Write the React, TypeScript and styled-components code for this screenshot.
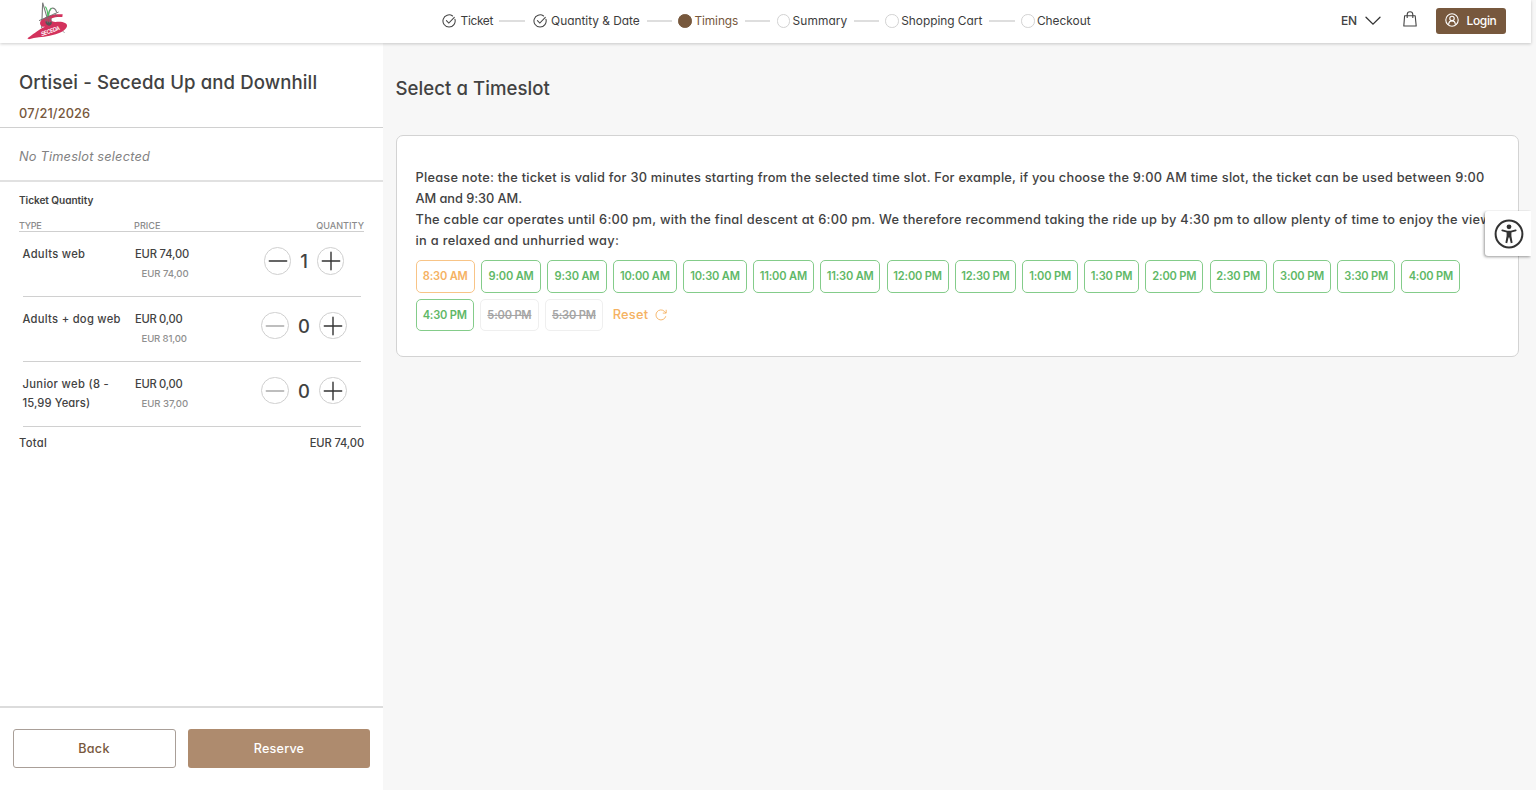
import React from "react";
import styled, { createGlobalStyle, css } from "styled-components";

const GlobalStyle = createGlobalStyle`
  *, *::before, *::after { box-sizing: border-box; }
  body {
    margin: 0;
    background: #f7f7f7;
    color: #424242;
    font-family: Inter, "Liberation Sans", sans-serif;
    font-feature-settings: "cv11";
    font-weight: 500;
    overflow: hidden;
  }
  button { font: inherit; font-feature-settings: inherit; color: inherit; background: none; border: 0; padding: 0; margin: 0; }
`;

/** Text whose tracking is tuned per label. */
const Label = styled.span<{ $track?: number }>`
  letter-spacing: ${(p) => p.$track ?? 0}px;
  white-space: pre;
`;

const Page = styled.div`
  display: flex;
  flex-direction: column;
  width: 1536px;
  height: 790px;
`;

const Header = styled.header`
  position: relative;
  z-index: 2;
  flex: none;
  display: grid;
  grid-template-columns: 442px 1fr auto;
  align-items: center;
  width: 1531px;
  height: 43px;
  padding: 0 25.5px 2px 0;
  background: #fff;
  box-shadow: 0 1px 3px rgba(0, 0, 0, 0.2);
`;

const Logo = styled.svg`
  width: 48px;
  height: 44px;
  margin: 0 0 -2px 24px;
  align-self: start;
`;

const Steps = styled.nav`
  display: flex;
  align-items: center;
  font-size: 11.9px;
  font-weight: 400;
  line-height: 18px;
`;

const Step = styled.div<{ $width: number; $gap: number; $active?: boolean }>`
  flex: none;
  display: flex;
  align-items: center;
  gap: ${(p) => p.$gap}px;
  width: ${(p) => p.$width}px;
  color: ${(p) => (p.$active ? "#77583d" : "#3d3d3d")};
  svg { flex: none; }
`;

const Connector = styled.i<{ $space: number }>`
  flex: none;
  width: 25.5px;
  height: 1.5px;
  margin-right: ${(p) => p.$space}px;
  background: #dedede;
`;

const Dot = styled.i<{ $filled?: boolean }>`
  flex: none;
  width: 13.5px;
  height: 13.5px;
  border-radius: 50%;
  border: 1px solid ${(p) => (p.$filled ? "#77583d" : "#d2d2d2")};
  background: ${(p) => (p.$filled ? "#77583d" : "#fff")};
`;

const Tools = styled.div`
  display: flex;
  align-items: center;
  font-size: 12px;
`;

const Language = styled.button`
  display: flex;
  align-items: center;
  gap: 7.5px;
  margin-right: 22.5px;
  padding-bottom: 1px;
`;

const Bag = styled.svg`
  margin: -5px 18.5px 0 0;
`;

const LoginButton = styled.button`
  display: flex;
  align-items: center;
  gap: 8px;
  width: 70px;
  height: 26px;
  padding: 0 0 2px 9px;
  border-radius: 3px;
  background: #77583d;
  color: #fff;
`;

const Body = styled.div`
  flex: 1;
  display: flex;
  min-height: 0;
`;

const Sidebar = styled.aside`
  flex: none;
  display: flex;
  flex-direction: column;
  width: 383px;
  background: #fff;
`;

const TicketHead = styled.section`
  height: 85px;
  padding: 25px 19px 0;
  border-bottom: 1px solid #d0d0d0;
`;

const TicketTitle = styled.h1`
  margin: 0;
  font-size: 18.6px;
  font-weight: 500;
  line-height: 28px;
`;

const TicketDate = styled.div`
  margin-top: 7.6px;
  color: #77583d;
  font-size: 12.8px;
  line-height: 20px;
`;

const SlotState = styled.section`
  height: 54px;
  padding: 19px 19px 0;
  border-bottom: 2px solid #e1e1e1;
  color: #828282;
  font-size: 12.8px;
  font-style: italic;
  font-weight: 400;
  line-height: 20px;
`;

const Quantities = styled.section`
  flex: 1;
  padding: 0 19px;
  font-size: 11.2px;
`;

const QuantityTitle = styled.h2`
  margin: 10px 0 11px;
  font-size: 10.1px;
  font-weight: 600;
  line-height: 16px;
`;

const ColumnHeads = styled.div`
  display: grid;
  grid-template-columns: 115px 1fr auto;
  height: 13px;
  border-bottom: 1px solid #cfcfcf;
  color: #8b8b8b;
  font-size: 9.1px;
  line-height: 13px;
`;

const TicketRow = styled.div`
  display: grid;
  grid-template-columns: 112.5px 1fr 88px;
  height: 64.9px;
  margin: 0 3.5px;
  padding-top: 13px;
  border-bottom: 1.4px solid #d0d0d0;
  line-height: 19.2px;
`;

const SubPrice = styled.div`
  padding-left: 6.5px;
  color: #8f8f8f;
  font-size: 9.6px;
  line-height: 20px;
`;

const Counter = styled.div`
  display: flex;
  justify-content: center;
  width: 88px;
  margin-left: -12.5px;
`;

const CounterButton = styled.button<{ $muted?: boolean }>`
  flex: none;
  display: flex;
  align-items: center;
  justify-content: center;
  width: 27.5px;
  height: 27.5px;
  margin-top: 2px;
  border: 1px solid #cfcfcf;
  border-radius: 50%;
  color: ${(p) => (p.$muted ? "#a9a9a9" : "#333")};
  svg { flex: none; }
`;

const Count = styled.span<{ $width: number }>`
  width: ${(p) => p.$width}px;
  padding-top: 7px;
  font-size: 18.4px;
  text-align: center;
`;

const TotalRow = styled.div`
  display: flex;
  justify-content: space-between;
  padding-top: 6.2px;
  line-height: 20px;
`;

const SidebarFooter = styled.footer`
  display: flex;
  gap: 12.5px;
  height: 84px;
  padding: 21.4px 13px 0 12.5px;
  border-top: 2px solid #dcdcdc;
`;

const ActionButton = styled.button<{ $primary?: boolean }>`
  width: ${(p) => (p.$primary ? 182 : 163)}px;
  height: 38.8px;
  border-radius: 3px;
  font-size: 12.6px;
  ${(p) =>
    p.$primary
      ? css`
          background: #ae8b6e;
          color: #fff;
        `
      : css`
          border: 1px solid #a99f98;
          color: #77583d;
        `}
`;

const Main = styled.main`
  flex: 1;
  padding: 31px 17.5px 0 12.5px;
`;

const MainTitle = styled.h2`
  margin: 0;
  font-size: 18.6px;
  font-weight: 500;
  line-height: 28px;
`;

const Card = styled.section`
  height: 222px;
  margin-top: 33px;
  padding: 32.2px 19.5px 0 19px;
  border: 1px solid #d3d3d3;
  border-radius: 7px;
  background: #fff;
`;

const Note = styled.p`
  display: flex;
  flex-direction: column;
  margin: 0;
  font-size: 12.8px;
  line-height: 20.8px;
`;

const Slots = styled.div`
  display: flex;
  flex-wrap: wrap;
  gap: 6px 6.2px;
  margin-top: 8.8px;
  width: 1060px;
`;

type SlotKind = "low" | "free" | "gone";

const slotColors: Record<SlotKind, { line: string; text: string }> = {
  low: { line: "#f8c487", text: "#f5b263" },
  free: { line: "#84cc8a", text: "#5fb867" },
  gone: { line: "#efefef", text: "#a5a5a5" },
};

const Slot = styled.button<{ $kind: SlotKind; $width: number }>`
  width: ${(p) => p.$width}px;
  height: 32.5px;
  border: 1px solid ${(p) => slotColors[p.$kind].line};
  border-radius: 5px;
  color: ${(p) => slotColors[p.$kind].text};
  font-size: 11.1px;
  font-weight: 600;
  text-decoration: ${(p) => (p.$kind === "gone" ? "line-through" : "none")};
`;

const Reset = styled.button`
  display: flex;
  align-items: center;
  gap: 7px;
  margin-left: 3.5px;
  color: #f5b263;
  font-size: 12.8px;
`;

const AccessibilityTab = styled.button`
  position: absolute;
  top: 211px;
  left: 1485px;
  display: flex;
  align-items: center;
  justify-content: center;
  width: 46px;
  height: 45px;
  padding: 0 0 0 1px;
  border-radius: 3px 0 0 3px;
  background: #fff;
  clip-path: inset(-1px 0 -6px -6px);
  box-shadow: -1px 1px 3px rgba(0, 0, 0, 0.4);
`;

const SecedaLogo = () => (
  <Logo viewBox="0 0 144 132" fill="none">
    <path d="M53 84 56 8 69 52M74 48C73 22 92 16 98 37" stroke="#7c7c7c" strokeWidth="3.4" />
    <path d="M64 20C70 28 72 36 71 52M82 24C76 32 73 42 71 52" stroke="#4bbd62" strokeWidth="3.2" />
    <path d="M116 43C92 40 64 48 50 63C46 70 48 77 56 80L63 80C45 88 36 96 10 115L15 118C34 111 54 112 77 107C102 102 125 94 129 79C131 67 112 63 94 66C82 65 78 60 84 55C92 50 106 51 115 51Z" fill="#d3325d" />
    <path d="M45 62 104 36M91 41 101 51M117 94 121 98" stroke="#666" strokeWidth="2.6" />
    <path d="M64 64C64 80 83 82 84 67Z" fill="#555" />
    <path d="M65 65V53L82 55V66M71 53V69M77 54V69" stroke="#777" strokeWidth="2" />
    <text x="53" y="109" transform="rotate(-20 53 109)" fill="#fff" fontSize="17" fontWeight="600" fontStyle="italic" textLength="60">SECEDA</text>
  </Logo>
);

const CheckCircle = () => (
  <svg width="14" height="14" viewBox="0 0 14 14" fill="none" stroke="#444" strokeWidth="1.05" strokeLinecap="round">
    <path d="M12.9 5.2A6.1 6.1 0 1 1 10.6 2" />
    <path d="M4.4 6.6 6.8 9 12.3 3.3" />
  </svg>
);

const Sign = ({ plus }: { plus?: boolean }) => (
  <svg width="20" height="20" viewBox="0 0 20 20" stroke="currentColor" strokeWidth="1.4" strokeLinecap="round">
    <path d={plus ? "M1.3 10H18.7M10 1.3V18.7" : "M1.3 10H18.7"} />
  </svg>
);

const steps = [
  { name: "Ticket", width: 57, track: -0.35, state: "done" },
  { name: "Quantity & Date", width: 114.3, track: -0.02, state: "done" },
  { name: "Timings", width: 66.5, track: -0.08, state: "current" },
  { name: "Summary", width: 77, track: 0.1, state: "next" },
  { name: "Shopping Cart", width: 104, track: -0.03, state: "next" },
  { name: "Checkout", width: 74, track: -0.02, state: "next" },
];

const tickets = [
  { lines: [["Adults web", 0.3]], price: "EUR 74,00", unit: "EUR 74,00", count: 1, unitTrack: -0.06 },
  { lines: [["Adults + dog web", 0.28]], price: "EUR 0,00", unit: "EUR 81,00", count: 0, unitTrack: -0.16 },
  { lines: [["Junior web (8 -", 0.33], ["15,99 Years)", 0.1]], price: "EUR 0,00", unit: "EUR 37,00", count: 0, unitTrack: -0.04 },
] as { lines: [string, number][]; price: string; unit: string; count: number; unitTrack: number }[];

const note: [string, number][] = [
  ["Please note: the ticket is valid for 30 minutes starting from the selected time slot. For example, if you choose the 9:00 AM time slot, the ticket can be used between 9:00", 0.235],
  ["AM and 9:30 AM.", -0.06],
  ["The cable car operates until 6:00 pm, with the final descent at 6:00 pm. We therefore recommend taking the ride up by 4:30 pm to allow plenty of time to enjoy the view", 0.28],
  ["in a relaxed and unhurried way:", 0.3],
];

const slots: [string, number, SlotKind][] = [
  ["8:30 AM", 59.5, "low"],
  ["9:00 AM", 59.8, "free"],
  ["9:30 AM", 59.5, "free"],
  ["10:00 AM", 64, "free"],
  ["10:30 AM", 63.8, "free"],
  ["11:00 AM", 60.6, "free"],
  ["11:30 AM", 60.6, "free"],
  ["12:00 PM", 62, "free"],
  ["12:30 PM", 61.4, "free"],
  ["1:00 PM", 55.4, "free"],
  ["1:30 PM", 55.2, "free"],
  ["2:00 PM", 58, "free"],
  ["2:30 PM", 57.4, "free"],
  ["3:00 PM", 58, "free"],
  ["3:30 PM", 57.9, "free"],
  ["4:00 PM", 59.1, "free"],
  ["4:30 PM", 58.5, "free"],
  ["5:00 PM", 58.4, "gone"],
  ["5:30 PM", 58.2, "gone"],
];

export default function App() {
  return (
    <Page>
      <GlobalStyle />
      <Header>
        <SecedaLogo />
        <Steps>
          {steps.map((s, i) => (
            <React.Fragment key={s.name}>
              {i > 0 && <Connector $space={s.state === "done" ? 8 : 6.2} />}
              <Step $width={s.width} $gap={s.state === "done" ? 4.6 : 2.4} $active={s.state === "current"}>
                {s.state === "done" ? <CheckCircle /> : <Dot $filled={s.state === "current"} />}
                <Label $track={s.track}>{s.name}</Label>
              </Step>
            </React.Fragment>
          ))}
        </Steps>
        <Tools>
          <Language>
            <Label $track={-0.2}>EN</Label>
            <svg width="16" height="10" viewBox="0 0 16 10" fill="none" stroke="#333" strokeWidth="1.3" strokeLinecap="round">
              <path d="M1 1.2 8 8.2 15 1.2" />
            </svg>
          </Language>
          <Bag width="14" height="16" viewBox="0 0 14 16" fill="none" stroke="#444" strokeWidth="1.1" strokeLinejoin="round">
            <path d="M1.6 4.8H12.2L13.2 15H.8Z" />
            <path d="M4.2 7V3.6a2.8 2.8 0 0 1 5.6 0V7" />
          </Bag>
          <LoginButton>
            <svg width="14" height="14" viewBox="0 0 14 14" fill="none" stroke="#fff" strokeWidth="1.1">
              <circle cx="7" cy="7" r="6.2" />
              <circle cx="7" cy="5.4" r="2.2" />
              <path d="M3.6 11.8C3.8 6.6 10.2 6.6 10.4 11.8" />
            </svg>
            <Label $track={-0.35}>Login</Label>
          </LoginButton>
        </Tools>
      </Header>
      <Body>
        <Sidebar>
          <TicketHead>
            <TicketTitle><Label $track={0.1}>Ortisei - Seceda Up and Downhill</Label></TicketTitle>
            <TicketDate><Label $track={0.12}>07/21/2026</Label></TicketDate>
          </TicketHead>
          <SlotState><Label $track={0.18}>No Timeslot selected</Label></SlotState>
          <Quantities>
            <QuantityTitle><Label $track={-0.06}>Ticket Quantity</Label></QuantityTitle>
            <ColumnHeads>
              <Label $track={-0.3}>TYPE</Label>
              <Label $track={0.05}>PRICE</Label>
              <Label $track={0.02}>QUANTITY</Label>
            </ColumnHeads>
            {tickets.map((t) => (
              <TicketRow key={t.unit}>
                <div>
                  {t.lines.map(([text, track]) => (
                    <div key={text}><Label $track={track}>{text}</Label></div>
                  ))}
                </div>
                <div>
                  <Label $track={t.count ? -0.16 : -0.3}>{t.price}</Label>
                  <SubPrice><Label $track={t.unitTrack}>{t.unit}</Label></SubPrice>
                </div>
                <Counter>
                  <CounterButton $muted={t.count === 0}><Sign /></CounterButton>
                  <Count $width={t.count ? 25.5 : 30.5}>{t.count}</Count>
                  <CounterButton><Sign plus /></CounterButton>
                </Counter>
              </TicketRow>
            ))}
            <TotalRow>
              <Label $track={0.3}>Total</Label>
              <Label $track={-0.14}>EUR 74,00</Label>
            </TotalRow>
          </Quantities>
          <SidebarFooter>
            <ActionButton><Label $track={0.3}>Back</Label></ActionButton>
            <ActionButton $primary><Label $track={0.2}>Reserve</Label></ActionButton>
          </SidebarFooter>
        </Sidebar>
        <Main>
          <MainTitle><Label $track={0.05}>Select a Timeslot</Label></MainTitle>
          <Card>
            <Note>
              {note.map(([text, track]) => (
                <Label key={text} $track={track}>{text}</Label>
              ))}
            </Note>
            <Slots>
              {slots.map(([time, width, kind]) => (
                <Slot key={time} $kind={kind} $width={width}>
                  <Label $track={-0.18}>{time}</Label>
                </Slot>
              ))}
              <Reset>
                <Label $track={0.25}>Reset</Label>
                <svg width="12" height="12" viewBox="0 0 12 12" fill="none" stroke="currentColor" strokeWidth="0.9">
                  <path d="M10.8 7.2A5 5 0 1 1 9.6 2.5L11 4M11.2.8V4.1H7.8" />
                </svg>
              </Reset>
            </Slots>
          </Card>
        </Main>
      </Body>
      <AccessibilityTab aria-label="Accessibility">
        <svg width="30" height="30" viewBox="0 0 30 30" fill="none" stroke="#333">
          <circle cx="15" cy="15" r="13.4" strokeWidth="2" />
          <circle cx="15" cy="7.8" r="2.4" fill="#333" stroke="none" />
          <path d="M8.3 11.3 13 12.6H17L21.7 11.3" strokeWidth="1.8" strokeLinecap="round" />
          <path d="M12.6 12H17.4V17L18.6 23.8 16.8 24.3 15.4 18.6H14.6L13.2 24.3 11.4 23.8 12.6 17Z" fill="#333" stroke="none" />
        </svg>
      </AccessibilityTab>
    </Page>
  );
}
